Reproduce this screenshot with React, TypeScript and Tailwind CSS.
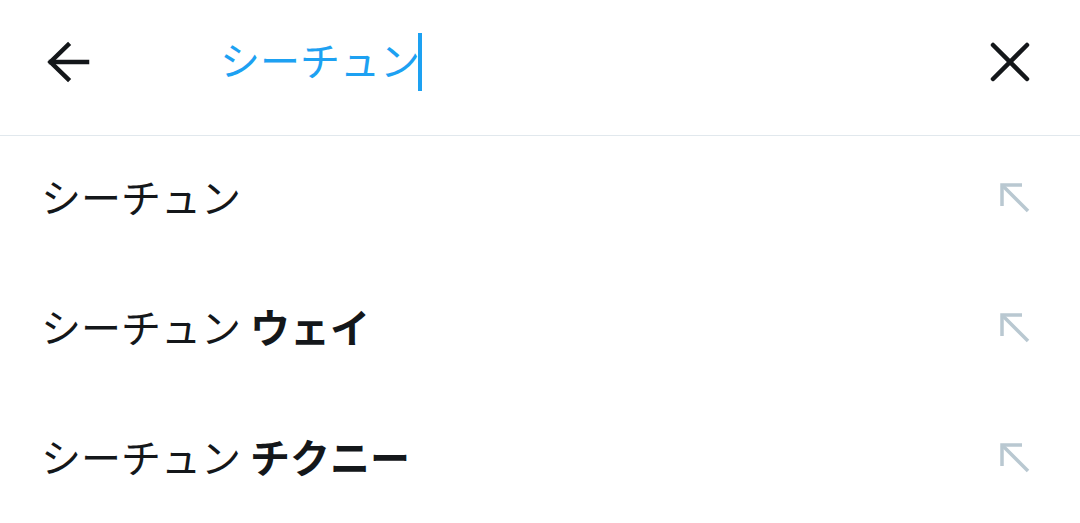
import React from "react";

const FONT = { fontFamily: '"Noto Sans CJK JP", "Noto Sans", sans-serif' };

function BackIcon() {
  return (
    <svg width="44" height="44" viewBox="0 0 44 44" fill="none" stroke="#14171a" strokeWidth="4.5" strokeLinecap="square">
      <path d="M5 22H41" />
      <path d="M22 5L4.5 22L22 39" strokeLinejoin="miter" />
    </svg>
  );
}

function CloseIcon() {
  return (
    <svg width="40" height="40" viewBox="0 0 40 40" fill="none" stroke="#14171a" strokeWidth="4.5" strokeLinecap="round">
      <path d="M3 3L37 37" />
      <path d="M37 3L3 37" />
    </svg>
  );
}

function FillIcon() {
  return (
    <svg width="30" height="30" viewBox="0 0 30 30" fill="none" stroke="#b9c8d1" strokeWidth="3.5">
      <path d="M2 23V2H22" strokeLinejoin="miter" />
      <path d="M2 2L28 28" />
    </svg>
  );
}

const rows: { base: string; extra?: string }[] = [
  { base: "シーチュン" },
  { base: "シーチュン", extra: "ウェイ" },
  { base: "シーチュン", extra: "チクニー" },
];

export default function App() {
  return (
    <div className="w-[1080px] h-[523px] bg-white overflow-hidden" style={FONT}>
      <div className="flex items-center h-[136px] pb-[12px] border-b border-[#e1e8ed]">
        <div className="pl-[46px] w-[220px] flex items-center">
          <BackIcon />
        </div>
        <div className="flex-1 flex items-center">
          <span className="text-[40px] leading-none text-[#1da1f2] mb-[6px]">シーチュン</span>
          <span className="w-[4px] h-[58px] bg-[#1da1f2] ml-[-2px]" />
        </div>
        <div className="pr-[50px] flex items-center">
          <CloseIcon />
        </div>
      </div>
      {rows.map((r, i) => (
        <div key={i} className="flex items-center justify-between h-[130px] pl-[41px] pr-[50px]">
          <div className="text-[40px] leading-none text-[#14171a] mb-[10px]">
            {r.base}
            {r.extra && <span className="font-bold"> {r.extra}</span>}
          </div>
          <div className="mb-[6px]">
            <FillIcon />
          </div>
        </div>
      ))}
    </div>
  );
}
